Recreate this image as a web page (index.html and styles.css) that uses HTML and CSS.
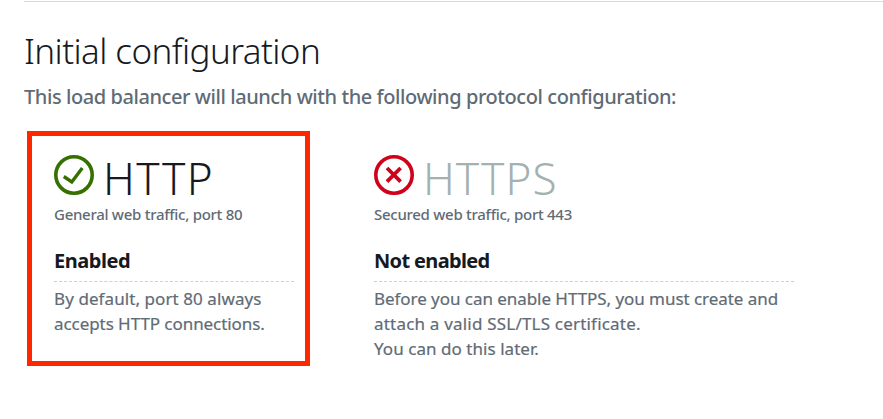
FILE: index.html
```html
<!DOCTYPE html>
<html lang="en">
<head>
<meta charset="utf-8">
<title>Initial configuration</title>
<link rel="stylesheet" href="styles.css">
</head>
<body>
<main class="page">
  <h1 class="title">Initial configuration</h1>
  <p class="intro">This load balancer will launch with the following protocol configuration:</p>
  <div class="protocols">
    <section class="protocol protocol-http">
      <div class="heading">
        <svg class="icon" viewBox="0 0 40 40" fill="none" stroke="#367001"><circle cx="20" cy="20" r="18.2" stroke-width="3.6"/><path d="M9.8 21.5 17.8 27 28.3 13" stroke-width="3.4"/></svg>
        <h2 class="name">HTTP</h2>
      </div>
      <p class="traffic">General web traffic, port 80</p>
      <h3 class="status">Enabled</h3>
      <p class="detail"><span class="line l1">By default, port 80 always</span><span class="line l2">accepts HTTP connections.</span></p>
    </section>
    <section class="protocol protocol-https">
      <div class="heading">
        <svg class="icon" viewBox="0 0 40 40" fill="none" stroke="#d0021b"><circle cx="20" cy="20" r="18.2" stroke-width="3.6"/><path d="M13 13 26.6 26.6M26.6 13 13 26.6" stroke-width="3.8"/></svg>
        <h2 class="name">HTTPS</h2>
      </div>
      <p class="traffic">Secured web traffic, port 443</p>
      <h3 class="status">Not enabled</h3>
      <p class="detail"><span class="line l3">Before you can enable HTTPS, you must create and</span><span class="line l4">attach a valid SSL/TLS certificate.</span><span class="line l5">You can do this later.</span></p>
    </section>
  </div>
</main>
</body>
</html>
```

FILE: styles.css
```css
*, *::after { box-sizing: border-box; }
body { margin: 0; min-height: 419px; background: #fff; color: #16191f; font-family: "Noto Sans", sans-serif; }
h1, h2, h3, p { margin: 0; }
.page { min-height: 419px; padding-top: 1px; margin-left: 24px; }
.title { border-top: 1px solid #d5dbdb; padding-top: 25px; font-size: 35px; font-weight: 300; line-height: 48px; letter-spacing: -0.58px; white-space: nowrap; }
.intro { margin-top: 7px; font-size: 20px; line-height: 30px; font-weight: 500; letter-spacing: -0.43px; color: #5f6b75; white-space: nowrap; }
.protocols { display: flex; gap: 80px; margin: 43px 0 0 30px; }
.protocol { position: relative; width: 240px; }
.protocol-https { width: 420px; }
.protocol-http::after { content: ""; position: absolute; left: -27px; top: -24px; width: 283px; height: 235px; border: 5px solid #ff2600; }
.heading { display: flex; height: 40px; gap: 9px; }
.icon { width: 40px; height: 40px; flex: none; }
.name { font-size: 44px; line-height: 46px; font-weight: 300; letter-spacing: 1.4px; }
.protocol-https .name { color: #a3b1b1; letter-spacing: 1px; }
.traffic { margin-top: 7px; font-size: 15px; line-height: 24px; font-weight: 500; letter-spacing: -0.28px; color: #5f6b75; }
.status { margin-top: 20px; height: 36px; font-size: 20px; line-height: 30px; font-weight: 700; letter-spacing: -0.45px; border-bottom: 1px dashed #ccd1d1; }
.protocol-https .status { letter-spacing: -0.65px; }
.detail { padding-top: 4px; font-size: 17px; line-height: 25px; -webkit-text-stroke: 0.2px #5f6b75; color: #5f6b75; white-space: nowrap; }
.line { display: block; }
.l1 { letter-spacing: 0.08px; }
.l2 { letter-spacing: -0.06px; }
.l3 { letter-spacing: -0.05px; }
.l4 { letter-spacing: 0.2px; }
.l5 { letter-spacing: 0.05px; }
```
